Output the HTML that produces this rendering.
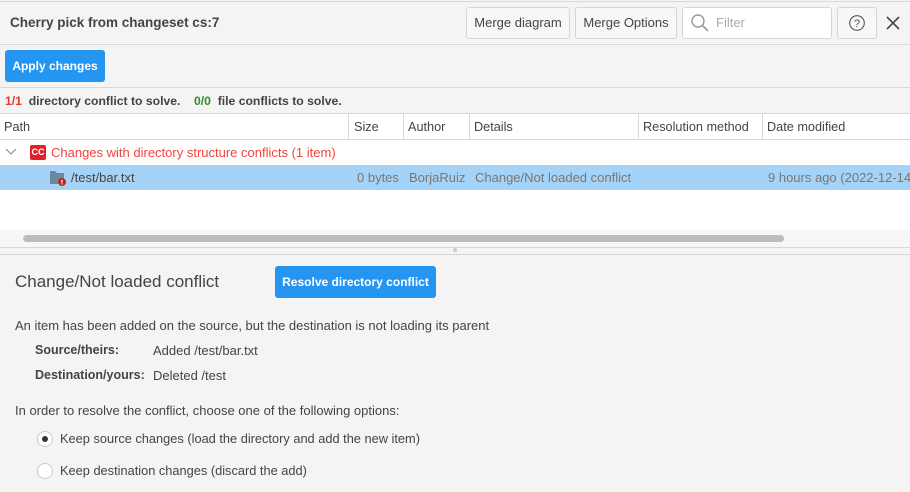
<!DOCTYPE html>
<html><head><meta charset="utf-8"><style>
*{box-sizing:border-box;margin:0;padding:0}
body{width:910px;height:492px;overflow:hidden;background:#f4f4f4;font-family:"Liberation Sans",sans-serif;font-size:13px;color:#444;position:relative}
.a{position:absolute;white-space:nowrap}
.btn{position:absolute;border:1px solid #d6d6d6;border-radius:3px;background:#f7f7f7;color:#444;font-size:13px;text-align:center}
.blue{position:absolute;background:#2496f2;color:#fff;border-radius:3px;font-weight:bold;font-size:12px;text-align:center}
.hl{position:absolute;left:0;width:910px;height:1px;background:#d8d8d8}
.vl{position:absolute;top:114px;width:1px;height:25px;background:#d8d8d8}
.th{font-size:12.7px}
.td{font-size:13px}
</style></head><body>
<div class="hl" style="top:1px"></div>
<div class="a" style="left:10px;top:15px;font-size:13.5px;font-weight:bold;color:#444">Cherry pick from changeset cs:7</div>
<div class="btn" style="left:466px;top:7px;width:104px;height:32px;line-height:30px">Merge diagram</div>
<div class="btn" style="left:575px;top:7px;width:102px;height:32px;line-height:30px">Merge Options</div>
<div class="a" style="left:682px;top:7px;width:150px;height:32px;border:1px solid #d6d6d6;border-radius:3px;background:#fff"></div>
<svg class="a" style="left:689px;top:12px" width="22" height="22" viewBox="0 0 22 22"><circle cx="9" cy="9" r="6" fill="none" stroke="#999" stroke-width="1.4"/><line x1="13.5" y1="13.5" x2="19" y2="19" stroke="#999" stroke-width="1.6"/></svg>
<div class="a" style="left:716px;top:15px;color:#aaa;font-size:13px">Filter</div>
<div class="btn" style="left:837px;top:7px;width:40px;height:32px"></div>
<svg class="a" style="left:848px;top:14px" width="18" height="18" viewBox="0 0 18 18"><circle cx="9" cy="9" r="7.3" fill="none" stroke="#555" stroke-width="1.1"/><text x="9" y="13" font-size="11" text-anchor="middle" fill="#555" font-family="Liberation Sans">?</text></svg>
<svg class="a" style="left:886px;top:16px" width="14" height="14" viewBox="0 0 14 14"><path d="M1 1L13 13M13 1L1 13" stroke="#444" stroke-width="1.6"/></svg>
<div class="hl" style="top:44px"></div>
<div class="blue" style="left:5px;top:50px;width:100px;height:32px;line-height:32px">Apply changes</div>
<div class="hl" style="top:87px"></div>
<div class="a" style="left:5px;top:94px;font-weight:bold;font-size:12.2px"><span style="color:#e53935">1/1</span>&nbsp; directory conflict to solve.&nbsp;&nbsp;&nbsp; <span style="color:#2e8b2e">0/0</span>&nbsp; file conflicts to solve.</div>
<div class="hl" style="top:113px"></div>
<div class="a" style="left:0;top:114px;width:910px;height:116px;background:#fff"></div>
<div class="a th" style="left:4px;top:120px">Path</div>
<div class="a th" style="left:354px;top:120px">Size</div>
<div class="a th" style="left:408px;top:120px">Author</div>
<div class="a th" style="left:474px;top:120px">Details</div>
<div class="a th" style="left:643px;top:120px">Resolution method</div>
<div class="a th" style="left:767px;top:120px">Date modified</div>
<div class="vl" style="left:348px"></div><div class="vl" style="left:403px"></div><div class="vl" style="left:469px"></div><div class="vl" style="left:638px"></div><div class="vl" style="left:762px"></div>
<div class="hl" style="top:139px"></div>
<svg class="a" style="left:5px;top:148px" width="12" height="8" viewBox="0 0 12 8"><path d="M1 1L6 6L11 1" fill="none" stroke="#888" stroke-width="1"/></svg>
<div class="a" style="left:30px;top:145px;width:16px;height:15px;background:#e0202a;border-radius:2px;color:#fff;font-weight:bold;font-size:9px;line-height:15px;text-align:center">CC</div>
<div class="a td" style="left:51px;top:145px;color:#f0443c">Changes with directory structure conflicts (1 item)</div>
<div class="a" style="left:0;top:165px;width:910px;height:25px;background:#a5d3f7"></div>
<svg class="a" style="left:49px;top:169px" width="18" height="18" viewBox="0 0 18 18"><path d="M1 2H6L8 4H15V15H1Z" fill="#6e87a0"/><circle cx="13" cy="13" r="4" fill="#c0281e"/><rect x="12.4" y="10.8" width="1.2" height="2.8" fill="#fff"/><rect x="12.4" y="14.3" width="1.2" height="1.2" fill="#fff"/></svg>
<div class="a td" style="left:71px;top:170px;color:#444">/test/bar.txt</div>
<div class="a td" style="left:357px;top:170px;color:#777">0 bytes</div>
<div class="a td" style="left:409px;top:170px;color:#777">BorjaRuiz</div>
<div class="a td" style="left:475px;top:170px;color:#777">Change/Not loaded conflict</div>
<div class="a td" style="left:768px;top:170px;color:#777">9 hours ago (2022-12-14</div>
<div class="a" style="left:0;top:230px;width:910px;height:17px;background:#f7f7f7"></div>
<div class="a" style="left:23px;top:235px;width:761px;height:7px;background:#bdbdbd;border-radius:4px"></div>
<div class="hl" style="top:247px"></div>
<div class="a" style="left:453px;top:248px;width:4px;height:4px;background:#ccc;border-radius:2px"></div>
<div class="hl" style="top:254px"></div>
<div class="a" style="left:15px;top:272px;font-size:17px;color:#444">Change/Not loaded conflict</div>
<div class="blue" style="left:275px;top:266px;width:161px;height:32px;line-height:32px">Resolve directory conflict</div>
<div class="a" style="left:15px;top:318px">An item has been added on the source, but the destination is not loading its parent</div>
<div class="a" style="left:35px;top:343px;font-weight:bold;font-size:12.5px">Source/theirs:</div>
<div class="a" style="left:153px;top:343px">Added /test/bar.txt</div>
<div class="a" style="left:35px;top:368px;font-weight:bold;font-size:12.5px">Destination/yours:</div>
<div class="a" style="left:153px;top:368px">Deleted /test</div>
<div class="a" style="left:15px;top:403px">In order to resolve the conflict, choose one of the following options:</div>
<div class="a" style="left:37px;top:431px;width:16px;height:16px;border:1px solid #ccc;border-radius:50%;background:#fff"></div>
<div class="a" style="left:42px;top:436px;width:6px;height:6px;border-radius:50%;background:#333"></div>
<div class="a" style="left:60px;top:431px;font-size:12.8px">Keep source changes (load the directory and add the new item)</div>
<div class="a" style="left:37px;top:463px;width:16px;height:16px;border:1px solid #ccc;border-radius:50%;background:#fff"></div>
<div class="a" style="left:60px;top:463px;font-size:12.8px">Keep destination changes (discard the add)</div>
</body></html>
